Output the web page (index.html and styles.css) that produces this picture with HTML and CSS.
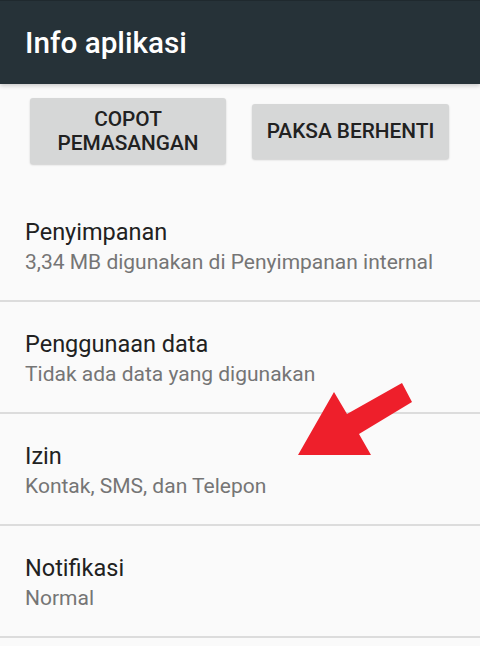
FILE: index.html
```html
<!DOCTYPE html>
<html lang="id">
<head>
<meta charset="utf-8">
<title>Info aplikasi</title>
<link rel="stylesheet" href="styles.css">
</head>
<body>
<div class="screen">
  <header class="appbar">
    <h1 class="title">Info aplikasi</h1>
  </header>
  <div class="actions">
    <button class="btn btn-tall">COPOT<br>PEMASANGAN</button>
    <button class="btn btn-short">PAKSA BERHENTI</button>
  </div>
  <ul class="list">
    <li class="item">
      <div class="item-title">Penyimpanan</div>
      <div class="item-sub">3,34 MB digunakan di Penyimpanan internal</div>
    </li>
    <li class="item">
      <div class="item-title">Penggunaan data</div>
      <div class="item-sub">Tidak ada data yang digunakan</div>
    </li>
    <li class="item">
      <div class="item-title">Izin</div>
      <div class="item-sub">Kontak, SMS, dan Telepon</div>
    </li>
    <li class="item">
      <div class="item-title">Notifikasi</div>
      <div class="item-sub">Normal</div>
    </li>
  </ul>
  <svg class="arrow" width="480" height="646" viewBox="0 0 480 646" aria-hidden="true">
    <polygon points="298,455 334,392 347,414 402,383 412,402 359,434 371,455" fill="#ee1f2b"/>
  </svg>
</div>
</body>
</html>
```
FILE: styles.css
```css
* { box-sizing: border-box; }
html, body {
  margin: 0;
  padding: 0;
  background: #fafafa;
}
body {
  font-family: Roboto, "Liberation Sans", sans-serif;
  width: 480px;
  height: 646px;
  overflow: hidden;
}
.screen {
  position: relative;
  width: 480px;
  height: 646px;
  background: #fafafa;
}
.appbar {
  height: 84px;
  background: #263238;
  border-top: 1px solid #1f292e;
  display: flex;
  align-items: center;
  padding-left: 25px;
  box-shadow: 0 2px 4px rgba(0,0,0,0.18);
}
.title {
  margin: 0;
  color: #ffffff;
  font-size: 29.7px;
  font-weight: 500;
  letter-spacing: 0;
}
.actions {
  display: flex;
  align-items: center;
  gap: 26px;
  padding: 14px 0 26px 30px;
}
.btn {
  border: none;
  border-radius: 3px;
  background: #d6d7d7;
  color: #212121;
  font-family: Roboto, "Liberation Sans", sans-serif;
  font-weight: 500;
  font-size: 20.8px;
  line-height: 24px;
  text-align: center;
  padding: 0;
  box-shadow: 0 1px 2px rgba(0,0,0,0.18);
}
.btn-tall {
  width: 196px;
  height: 66px;
}
.btn-short {
  width: 197px;
  height: 55px;
}
.list {
  list-style: none;
  margin: 0;
  padding: 0;
}
.item {
  padding: 28px 25px 24px;
  border-bottom: 2px solid #dcdcdc;
}
.item-title {
  font-size: 23.5px;
  line-height: 28px;
  color: #212121;
}
.item-sub {
  margin-top: 2px;
  font-size: 21px;
  line-height: 28px;
  color: #757575;
}
.arrow {
  position: absolute;
  left: 0;
  top: 0;
  pointer-events: none;
}
```
